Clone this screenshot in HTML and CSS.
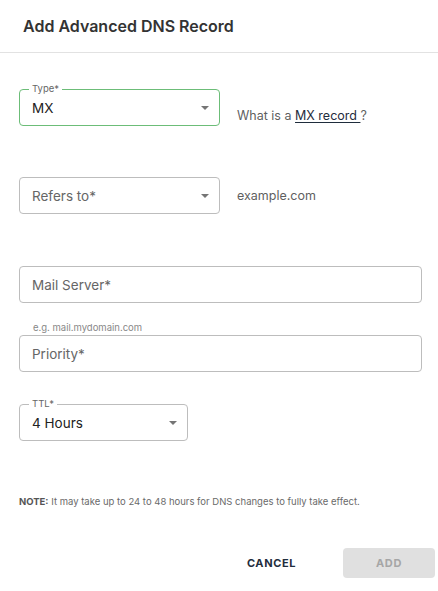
FILE: index.html
```html
<!DOCTYPE html>
<html lang="en">
<head>
<meta charset="utf-8">
<title>Add Advanced DNS Record</title>
<link rel="stylesheet" href="styles.css">
</head>
<body>
<div class="dialog">
  <header class="dialog-header">
    <h1 class="dialog-title">Add Advanced DNS Record</h1>
  </header>
  <form class="dialog-body">
    <div class="row row-type">
      <div class="field field-select field-active w-half">
        <span class="field-label">Type*</span>
        <span class="field-value">MX</span>
        <span class="caret"></span>
      </div>
      <p class="side-text side-low">What is a <a href="#" class="link">MX record </a>?</p>
    </div>

    <div class="row row-refers">
      <div class="field field-select w-half">
        <span class="field-placeholder">Refers to*</span>
        <span class="caret"></span>
      </div>
      <p class="side-text">example.com</p>
    </div>

    <div class="field w-full row-mail">
      <span class="field-placeholder">Mail Server*</span>
    </div>
    <p class="helper">e.g. mail.mydomain.com</p>

    <div class="field w-full row-priority">
      <span class="field-placeholder">Priority*</span>
    </div>

    <div class="field field-select w-ttl row-ttl">
      <span class="field-label">TTL*</span>
      <span class="field-value">4 Hours</span>
      <span class="caret"></span>
    </div>

    <p class="note"><strong>NOTE:</strong> It may take up to 24 to 48 hours for DNS changes to fully take effect.</p>

    <div class="actions">
      <button type="button" class="btn btn-text">CANCEL</button>
      <button type="button" class="btn btn-disabled" disabled>ADD</button>
    </div>
  </form>
</div>
</body>
</html>
```

FILE: styles.css
```css
* { box-sizing: border-box; }

html, body {
  margin: 0;
  padding: 0;
  background: #ffffff;
}

body {
  font-family: Inter, "Noto Sans", "Liberation Sans", sans-serif;
  color: #333333;
  width: 438px;
  height: 591px;
  overflow: hidden;
}

.dialog {
  width: 438px;
}

.dialog-header {
  height: 53px;
  border-bottom: 1px solid #e2e2e2;
  display: flex;
  align-items: center;
  padding: 0 23px 1px;
}

.dialog-title {
  margin: 0;
  font-size: 16px;
  font-weight: 600;
  color: #333333;
  letter-spacing: 0;
}

.dialog-body {
  padding: 36px 16px 0 19px;
  display: flex;
  flex-direction: column;
  align-items: flex-start;
}

.row {
  display: flex;
  align-items: center;
  gap: 17px;
  width: 100%;
}

.row-refers { margin-top: 51px; }
.row-mail { margin-top: 52px; }
.row-priority { margin-top: 1px; }
.row-ttl { margin-top: 32px; }

.field {
  position: relative;
  height: 37px;
  border: 1px solid #bdbdbd;
  border-radius: 4px;
  display: flex;
  align-items: center;
  padding: 0 10px 0 12px;
}

.field-active { border-color: #6cbd78; }

.w-half { width: 201px; }
.w-full { width: 403px; }
.w-ttl { width: 169px; }

.field-label {
  position: absolute;
  left: 9px;
  top: -7px;
  padding: 0 3px;
  background: #ffffff;
  font-size: 9.5px;
  line-height: 12px;
  color: #666666;
}

.field-value {
  flex: 1;
  font-size: 13.5px;
  color: #222222;
  padding-top: 1px;
}

.field-placeholder {
  flex: 1;
  font-size: 13.5px;
  color: #666666;
}

.caret {
  width: 0;
  height: 0;
  border-left: 4.5px solid transparent;
  border-right: 4.5px solid transparent;
  border-top: 4.5px solid #757575;
  margin-left: 8px;
}

.side-text {
  margin: 0;
  font-size: 12.5px;
  color: #5f5f5f;
}

.side-low {
  align-self: center;
  margin-top: 15px;
}

.link {
  color: #1f2d3d;
  text-decoration: underline;
  text-underline-offset: 2px;
}

.helper {
  margin: 19px 0 0 14px;
  font-size: 9.5px;
  line-height: 12px;
  color: #888888;
}

.note {
  margin: 55px 0 0 0;
  font-size: 9.5px;
  line-height: 12px;
  color: #6a6a6a;
}

.note strong {
  font-weight: 700;
  color: #555555;
}

.actions {
  margin-top: 40px;
  width: 416px;
  display: flex;
  justify-content: flex-end;
  align-items: center;
  gap: 34px;
}

.btn {
  font-family: inherit;
  font-size: 11px;
  font-weight: 700;
  letter-spacing: 0.6px;
  border: none;
  background: none;
  padding: 0;
  cursor: pointer;
}

.btn-text {
  color: #1f2d3d;
  padding: 0 13px;
  height: 30px;
}

.btn-disabled {
  width: 92px;
  height: 30px;
  border-radius: 4px;
  background: #e0e0e0;
  color: #a6a6a6;
  cursor: default;
}
```
